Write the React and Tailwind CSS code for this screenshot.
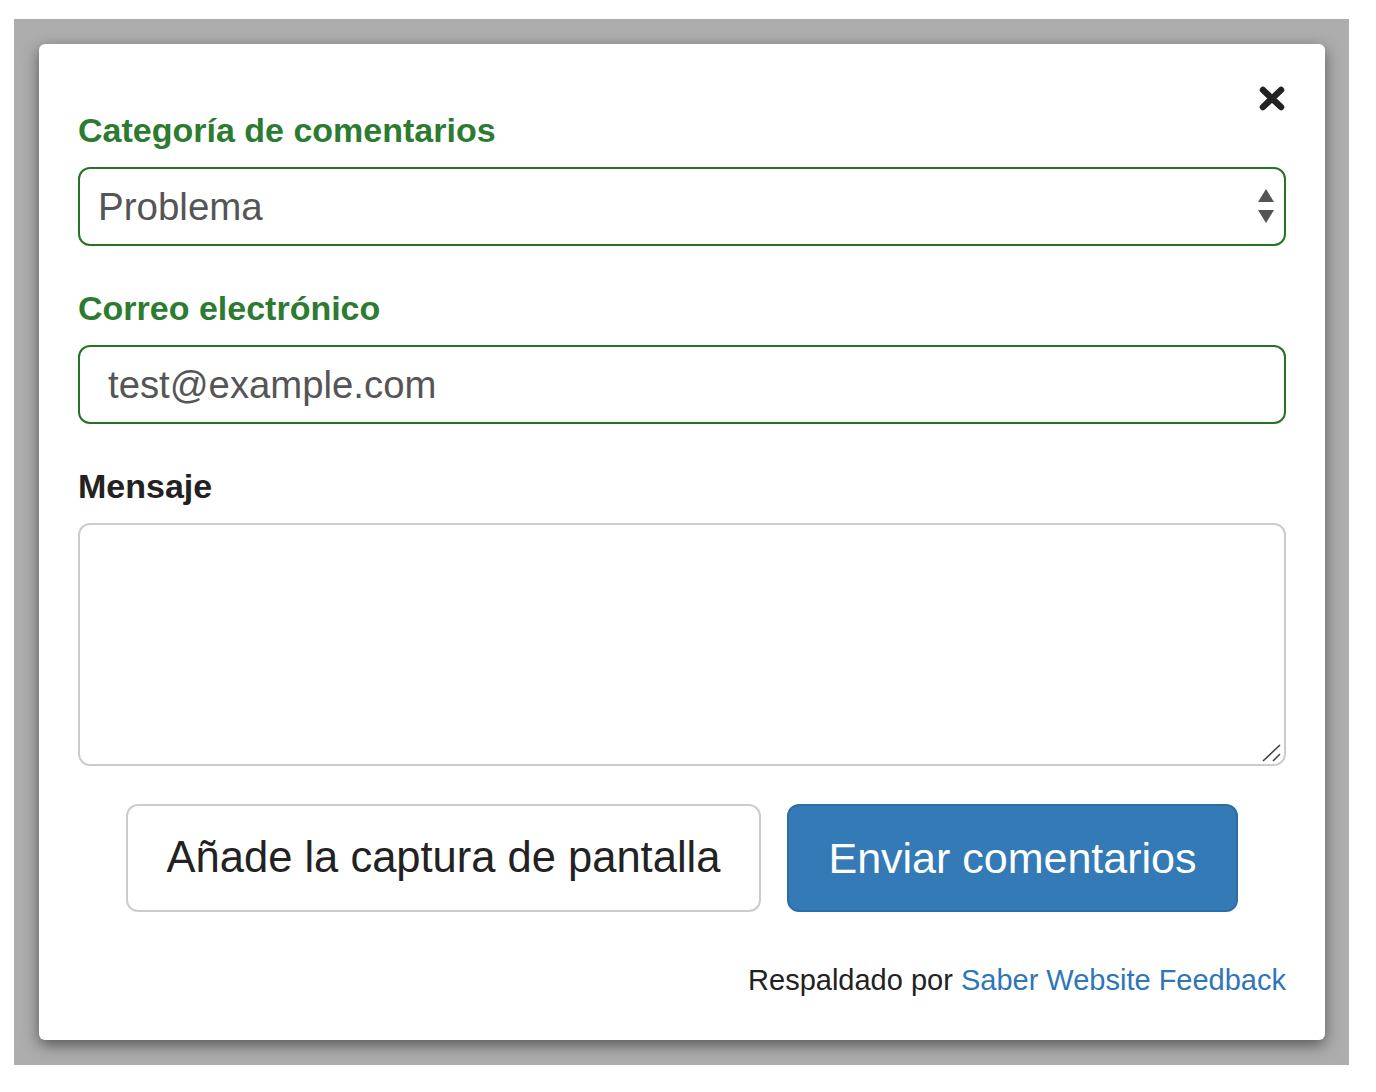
import React from "react";

const SelectArrows = () => (
  <svg width="16" height="34" viewBox="0 0 16 34" className="pointer-events-none absolute right-[12px] top-[22px]">
    <path d="M8 0 L16 13 L0 13 Z" fill="#555" />
    <path d="M0 21 L16 21 L8 34 Z" fill="#555" />
  </svg>
);

const CloseIcon = () => (
  <svg width="26" height="25" viewBox="0 0 26 25">
    <path d="M4 4 L22 21 M22 4 L4 21" stroke="#222" strokeWidth="6.5" strokeLinecap="round" />
  </svg>
);

const ResizeHandle = () => (
  <svg width="22" height="20" viewBox="0 0 22 20" className="pointer-events-none absolute right-[3px] bottom-[3px]">
    <path d="M2 18 L19 2 M12 18 L19 11" stroke="#444" strokeWidth="1.6" />
  </svg>
);

export default function App() {
  return (
    <div className="min-h-[1092px] bg-white pl-[14px] pt-[19px] font-['Liberation_Sans',Arial,sans-serif]">
      <div className="w-[1335px] h-[1046px] bg-[#adadad] p-[25px]">
        <div className="relative w-[1286px] rounded-[6px] bg-white px-[39px] pt-[62px] pb-[40px] shadow-[0_5px_15px_rgba(0,0,0,0.5)]">
          {/* Close */}
          <button className="absolute right-[40px] top-[42px]">
            <CloseIcon />
          </button>

          {/* Categoria */}
          <label className="block text-[34px] leading-[48px] font-bold text-[#2d7b31]">
            Categoría de comentarios
          </label>
          <div className="relative mt-[13px]">
            <select
              defaultValue="Problema"
              className="block h-[79px] w-full appearance-none rounded-[12px] border-2 border-[#267326] bg-white pl-[18px] text-[38.5px] text-[#555] outline-none"
            >
              <option>Problema</option>
              <option>Sugerencia</option>
              <option>Pregunta</option>
            </select>
            <SelectArrows />
          </div>

          {/* Correo */}
          <label className="mt-[38px] block text-[34px] leading-[48px] font-bold text-[#2d7b31]">
            Correo electrónico
          </label>
          <input
            readOnly
            value="test@example.com"
            className="mt-[13px] block h-[79px] w-full rounded-[12px] border-2 border-[#267326] bg-white px-[28px] text-[38.3px] text-[#555] outline-none"
          />

          {/* Mensaje */}
          <label className="mt-[38px] block text-[34px] leading-[48px] font-bold text-[#222]">
            Mensaje
          </label>
          <div className="relative mt-[13px]">
            <textarea className="block h-[243px] w-full resize-none rounded-[12px] border-2 border-[#ccc] bg-white outline-none" />
            <ResizeHandle />
          </div>

          {/* Buttons */}
          <div className="mt-[38px] flex justify-center gap-[26px]">
            <button className="h-[108px] w-[635px] rounded-[12px] border-2 border-[#ccc] bg-white text-[43.5px] text-[#222]">
              Añade la captura de pantalla
            </button>
            <button className="h-[108px] w-[451px] rounded-[12px] border-2 border-[#2e6da4] bg-[#337ab7] text-[43px] text-white">
              Enviar comentarios
            </button>
          </div>

          {/* Footer */}
          <p className="mt-[48px] text-right text-[29px] leading-[40px] text-[#222]">
            Respaldado por <a className="text-[#2f76b9]">Saber Website Feedback</a>
          </p>
        </div>
      </div>
    </div>
  );
}
